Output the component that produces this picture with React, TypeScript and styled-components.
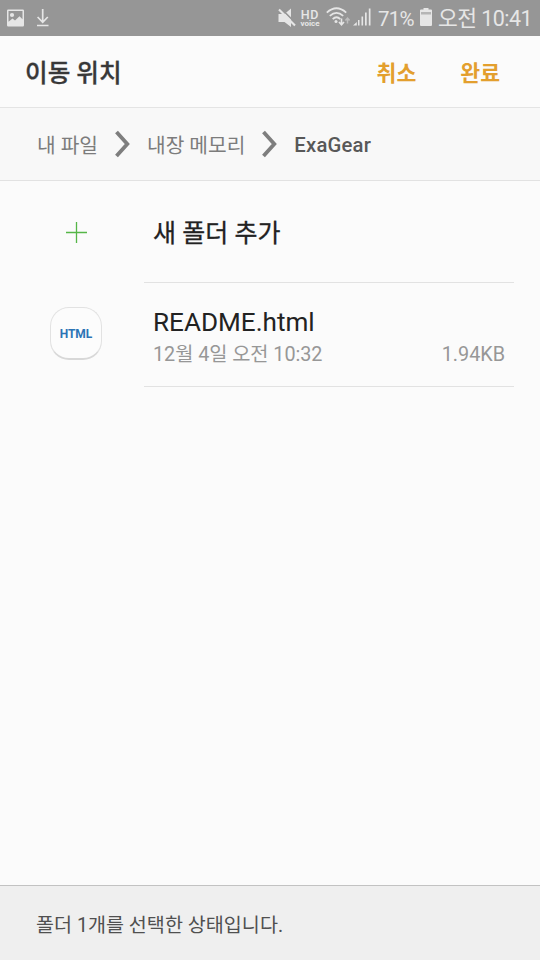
import React from "react";
import styled, { createGlobalStyle } from "styled-components";

const GlobalStyle = createGlobalStyle`
  * { box-sizing: border-box; }
  html, body { margin: 0; padding: 0; background: #fbfbfb; }
  body { font-family: Roboto, "Noto Sans CJK KR", sans-serif; }
`;

const Screen = styled.div`
  width: 540px;
  height: 960px;
  display: flex;
  flex-direction: column;
  overflow: hidden;
  background: #fbfbfb;
  white-space: nowrap;
`;

const StatusBar = styled.div`
  flex: none;
  height: 36px;
  display: flex;
  align-items: center;
  background: #969696;
  color: #e6e6e6;
  padding-right: 8px;
  svg { display: block; flex: none; }
`;

const StatusText = styled.span<{ $size: number; $width: number; $left: number; $spacing: number }>`
  width: ${(p) => p.$width}px;
  font-size: ${(p) => p.$size}px;
  line-height: 38px;
  height: 36px;
  margin-left: ${(p) => p.$left}px;
  letter-spacing: ${(p) => p.$spacing}px;
`;

const HdVoice = styled.div`
  display: flex;
  flex-direction: column;
  align-items: center;
  width: 20px;
  margin-left: 3px;
`;

const HdTop = styled.span`
  font-size: 12.5px;
  line-height: 12px;
  font-weight: 500;
  letter-spacing: 0.8px;
`;

const HdBottom = styled.span`
  font-size: 8px;
  line-height: 8px;
  margin-top: -1px;
  font-weight: 700;
`;

const Header = styled.header`
  flex: none;
  height: 72px;
  display: flex;
  align-items: center;
  padding: 4px 40px 0 25px;
  border-bottom: 1px solid #e4e4e4;
`;

const Title = styled.h1`
  margin: 0 auto 0 0;
  padding-top: 1px;
  font-size: 24.6px;
  line-height: 40px;
  font-weight: 500;
  color: #383838;
  -webkit-text-stroke: 0.3px #383838;
`;

const Action = styled.button`
  margin: 0 0 0 44px;
  padding: 0;
  border: 0;
  background: none;
  font-family: inherit;
  font-size: 21.6px;
  line-height: 40px;
  font-weight: 700;
  color: #e39f2e;
`;

const Breadcrumb = styled.nav`
  flex: none;
  height: 73px;
  display: flex;
  align-items: center;
  padding-left: 37px;
  background: #f8f8f8;
  border-bottom: 1px solid #e2e2e2;
  svg { display: block; flex: none; margin: 0 16px 0 16px; }
`;

const Crumb = styled.span<{ $current?: boolean }>`
  font-size: 20.3px;
  line-height: 40px;
  padding-top: ${(p) => (p.$current ? 1 : 3)}px;
  font-weight: ${(p) => (p.$current ? 500 : 400)};
  color: ${(p) => (p.$current ? "#585858" : "#7c7c7c")};
  letter-spacing: ${(p) => (p.$current ? 0.2 : 0)}px;
`;

const List = styled.main`
  flex: 1;
  padding-right: 26px;
`;

const Row = styled.div<{ $height: number }>`
  height: ${(p) => p.$height}px;
  display: flex;
`;

const IconCell = styled.div<{ $lift?: number }>`
  width: 144px;
  padding-left: 8px;
  padding-bottom: ${(p) => p.$lift ?? 0}px;
  display: flex;
  align-items: center;
  justify-content: center;
  svg { display: block; }
`;

const RowBody = styled.div`
  flex: 1;
  padding: 4px 9px 0;
  display: flex;
  flex-direction: column;
  justify-content: center;
  border-bottom: 1px solid #e2e2e2;
`;

const Name = styled.div<{ $size: number; $height: number; $stroke?: number }>`
  font-size: ${(p) => p.$size}px;
  line-height: ${(p) => p.$height}px;
  color: #222;
  -webkit-text-stroke: ${(p) => p.$stroke ?? 0}px #222;
`;

const Meta = styled.div`
  display: flex;
  justify-content: space-between;
  height: 30px;
  font-size: 19.8px;
  line-height: 32px;
  color: #979797;
`;

const ModifiedDate = styled.span`
  letter-spacing: -0.05px;
`;

const HtmlBadge = styled.div`
  width: 52px;
  height: 53px;
  display: flex;
  align-items: center;
  justify-content: center;
  padding-top: 2px;
  border: 1px solid #e2e2e2;
  border-bottom: 2px solid #d8d8d8;
  border-radius: 19px;
  background: #fcfcfc;
  font-size: 12px;
  font-weight: 700;
  color: #2c74b5;
`;

const Footer = styled.footer`
  flex: none;
  height: 75px;
  display: flex;
  align-items: center;
  padding: 0 0 0 36px;
  background: #efefef;
  border-top: 1px solid #c2c2c2;
  font-size: 19.6px;
  color: #505050;
`;

const Chevron = () => (
  <svg width="17" height="28" viewBox="0 0 17 28" fill="none" stroke="#7e7e7e" strokeWidth="3.8">
    <path d="M2.500 2 L13.300 14 L2.500 26" />
  </svg>
);

const PictureIcon = () => (
  <svg width="18" height="18" viewBox="0 0 18 18">
    <path
      fillRule="evenodd"
      fill="#e6e6e6"
      d="M1.200 0.500h14.600a1.200 1.200 0 0 1 1.200 1.200v14.600a1.200 1.200 0 0 1-1.200 1.200h-14.600a1.200 1.200 0 0 1-1.200-1.200v-14.600a1.200 1.200 0 0 1 1.200-1.200zM1.500 2v10.800l4-3.300 2.500 2.100 4.500-4.300 3 3V2z"
    />
    <circle cx="5" cy="6" r="2.100" fill="#e6e6e6" />
  </svg>
);

const DownloadIcon = () => (
  <svg width="14" height="18" viewBox="0 0 14 18" fill="none" stroke="#e6e6e6" strokeWidth="1.7">
    <path d="M5.700 0v13.300M0.600 8l5.100 5.300 5.100-5.300M0 16.500h11.500" />
  </svg>
);

const MuteIcon = () => (
  <svg width="19" height="20" viewBox="0 0 19 20">
    <path d="M0.500 6h6L13 0.500v18.500L6.500 14h-6z" fill="#e6e6e6" />
    <path d="M3 0.500L19 16.500" stroke="#969696" strokeWidth="1.600" />
    <path d="M1 1.500L17 17.500" stroke="#e6e6e6" strokeWidth="2.200" />
  </svg>
);

const WifiIcon = () => (
  <svg width="24" height="20" viewBox="0 0 24 20" fill="none" stroke="#e6e6e6" strokeWidth="1.8">
    <path d="M0.800 5.600Q10.500-3 20.200 5.600M3.800 8.900Q10.500 2.800 17.200 8.900M6.700 12.100Q10.500 8.500 14.300 12.100" />
    <circle cx="10" cy="14.500" r="1.500" fill="#e6e6e6" stroke="none" />
    <path d="M15.500 11.500v6M13 15l2.500 2.700 2.500-2.700" strokeWidth="1.600" />
    <path d="M21.500 16.500v-5M19.400 13.400l2.100-2.300 2.100 2.300" stroke="#bdbdbd" strokeWidth="1.500" />
  </svg>
);

const SignalIcon = () => (
  <svg width="18" height="18" viewBox="0 0 18 18" fill="#e6e6e6">
    <path d="M0 17.500L3.800 14V17.500zM5 12h1.500v5.500H5zM8.500 8.500h1.600v9H8.500zM12 4.500h1.700v13H12zM15.800 0.500h1.700v17h-1.700z" />
  </svg>
);

const BatteryIcon = () => (
  <svg width="12" height="18" viewBox="0 0 12 18">
    <path d="M3.500 0h5v1.500H11a1 1 0 0 1 1 1V17a1 1 0 0 1-1 1H1a1 1 0 0 1-1-1V2.500a1 1 0 0 1 1-1h2.500z" fill="#e6e6e6" />
    <path d="M1 4h10v2.500H1z" fill="#b5b5b5" />
  </svg>
);

const PlusIcon = () => (
  <svg width="21" height="21" viewBox="0 0 21 21" stroke="#55b647" strokeWidth="1.300">
    <path d="M10.500 0v21M0 10.500h21" />
  </svg>
);

const LeftIcons = styled.div`
  display: flex;
  gap: 12px;
  padding-left: 7px;
  padding-bottom: 1px;
  margin-right: auto;
`;

const IconSlot = styled.span<{ $left: number }>`
  margin-left: ${(p) => p.$left}px;
  margin-bottom: 2px;
`;

export default function App() {
  return (
    <>
      <GlobalStyle />
      <Screen>
        <StatusBar>
          <LeftIcons>
            <PictureIcon />
            <DownloadIcon />
          </LeftIcons>
          <MuteIcon />
          <HdVoice>
            <HdTop>HD</HdTop>
            <HdBottom>voice</HdBottom>
          </HdVoice>
          <IconSlot $left={6}><WifiIcon /></IconSlot>
          <IconSlot $left={3}><SignalIcon /></IconSlot>
          <StatusText $size={20.5} $width={35} $left={7} $spacing={-0.8}>71%</StatusText>
          <IconSlot $left={7}><BatteryIcon /></IconSlot>
          <StatusText $size={21.5} $width={94} $left={6} $spacing={-0.55}>오전 10:41</StatusText>
        </StatusBar>
        <Header>
          <Title>이동 위치</Title>
          <Action>취소</Action>
          <Action>완료</Action>
        </Header>
        <Breadcrumb>
          <Crumb>내 파일</Crumb>
          <Chevron />
          <Crumb>내장 메모리</Crumb>
          <Chevron />
          <Crumb $current>ExaGear</Crumb>
        </Breadcrumb>
        <List>
          <Row $height={102}>
            <IconCell><PlusIcon /></IconCell>
            <RowBody>
              <Name $size={25} $height={40} $stroke={0.3}>새 폴더 추가</Name>
            </RowBody>
          </Row>
          <Row $height={104}>
            <IconCell $lift={3}><HtmlBadge>HTML</HtmlBadge></IconCell>
            <RowBody>
              <Name $size={26.1} $height={34}>README.html</Name>
              <Meta>
                <ModifiedDate>12월 4일 오전 10:32</ModifiedDate>
                <span>1.94KB</span>
              </Meta>
            </RowBody>
          </Row>
        </List>
        <Footer>폴더 1개를 선택한 상태입니다.</Footer>
      </Screen>
    </>
  );
}
